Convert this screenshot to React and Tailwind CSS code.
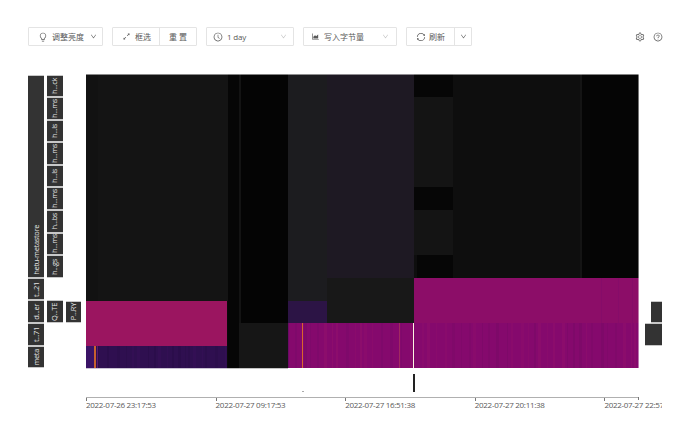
import React from "react";
import { AiOutlineBulb, AiOutlineDown, AiOutlineClockCircle, AiOutlineAreaChart, AiOutlineSync, AiOutlineSetting, AiOutlineQuestionCircle, AiOutlineArrowsAlt } from "react-icons/ai";

const F = { fontFamily: '"Open Sans","Noto Sans CJK SC",sans-serif' };

function Btn({ className = "", children }) {
  return <div className={"h-[19px] border border-[#e4e4e4] rounded-[1px] flex items-center text-[8px] text-[#595959] bg-white " + className}>{children}</div>;
}

function Label({ t, h, className = "items-center" }) {
  return (
    <div className={"flex justify-center bg-[#333333] border-y border-[#c8c8c8] w-full text-[7.5px] tracking-[-0.35px] leading-none text-[#e4e4e4] overflow-hidden " + className} style={{ height: h }}>
      <span className="[writing-mode:vertical-rl] rotate-180 whitespace-nowrap ml-[1px]">{t}</span>
    </div>
  );
}

const R = 22.6;

function stripes(x0, x1, y, h, colors, seed) {
  const out = [];
  let s = seed;
  let x = x0;
  while (x < x1) {
    s = (s * 9301 + 49297) % 233280;
    const w = 1 + (s % 3);
    const c = colors[(s >> 3) % colors.length];
    out.push(<rect key={seed + "-" + x} x={x} y={y} width={Math.min(w, x1 - x)} height={h} fill={c} />);
    x += w + 2 + ((s >> 5) % 7);
  }
  return out;
}

function Heatmap() {
  const X = 86;
  const Y = 74;
  const r = (x, y, w, h, fill, o) => <rect x={x - X} y={y - Y} width={w} height={h} fill={fill} opacity={o} />;
  return (
    <svg width="553" height="295" viewBox="0 0 553 295" shapeRendering="crispEdges" className="block shrink-0">
      {r(86, 74, 142, 227, "#141414")}
      {r(86, 74, 12, 227, "#121212")}
      {r(228, 74, 11, 295, "#060606")}
      {r(227, 301, 1, 68, "#0a0a0a")}
      {r(239, 74, 2, 295, "#131313")}
      {r(241, 74, 47, 249, "#040404")}
      {r(239, 323, 49, 46, "#161616")}
      {r(288, 74, 39, 227, "#1c1c1f")}
      {r(327, 74, 87, 204, "#1e1923")}
      {r(327, 278, 87, 45, "#181818")}
      {r(288, 301, 39, 22, "#2c1445")}
      {r(414, 74, 39, 204, "#141414")}
      {r(414, 74, 39, 23, "#060606")}
      {r(414, 187, 39, 23, "#060606")}
      {r(414, 255, 3, 23, "#0e0e0e")}
      {r(417, 255, 36, 23, "#060606")}
      {r(453, 74, 127, 204, "#0e0e0e")}
      {r(580, 74, 2, 204, "#141414")}
      {r(582, 74, 57, 204, "#050505")}
      {r(86, 301, 141, 45, "#9b1560")}
      {r(86, 346, 141, 23, "#2f0f50")}
      {stripes(12, 141, 272, 22, ["#2b0d4b", "#330f54", "#2c0e4c"], 17)}
      {r(86, 346, 8, 22, "#3a1366")}
      {r(94, 346, 2, 22, "#c8602e")}
      {r(97, 346, 1, 22, "#5a1a70")}
      {r(288, 323, 126, 45, "#85096d")}
      {stripes(202, 328, 249, 45, ["#7d0969", "#8a0b6c", "#7f096b", "#8c0d6c"], 5)}
      {r(288, 323, 1, 45, "#6a0a66")}
      {r(302, 323, 1, 45, "#d9662c")}
      {r(399, 323, 1, 45, "#a02a60")}
      {r(413, 323, 1, 45, "#fff4e0")}
      {r(414, 278, 225, 45, "#8c0d68")}
      {r(601, 278, 1, 45, "#860c69")}
      {r(618, 278, 1, 45, "#860c69")}
      {r(632, 278, 1, 45, "#860c69")}
      {r(414, 323, 225, 45, "#85096d")}
      {stripes(328, 553, 249, 45, ["#7e0969", "#890b6c", "#80096a", "#8b0c6c"], 29)}
      {r(86, 74, 553, 1, "#ffffff", 0.5)}
      {r(638, 74, 1, 295, "#ffffff", 0.45)}
      {r(86, 368, 553, 1, "#ffffff", 0.75)}
    </svg>
  );
}

const ticks = ["2022-07-26 23:17:53", "2022-07-27 09:17:53", "2022-07-27 16:51:38", "2022-07-27 20:11:38", "2022-07-27 22:57:53"];

export default function App() {
  return (
    <div className="w-[690px] h-[437px] bg-white overflow-hidden relative" style={F}>
      <div className="flex items-center pt-[27px] pl-[28px] h-[46px]">
        <Btn className="w-[75px] pl-[9px] gap-[4px]">
          <AiOutlineBulb size={10} /><span>调整亮度</span><AiOutlineDown size={7} className="ml-[2px]" />
        </Btn>
        <Btn className="ml-[9px] w-[85px]">
          <div className="w-[47px] h-full flex items-center pl-[9px] gap-[4px] border-r border-[#e4e4e4]"><AiOutlineArrowsAlt size={9} /><span>框选</span></div>
          <div className="flex-1 text-center">重 置</div>
        </Btn>
        <Btn className="ml-[9px] w-[88px] pl-[6px] gap-[4px]">
          <AiOutlineClockCircle size={10} /><span className="tracking-[-0.2px]">1 day</span><AiOutlineDown size={7} className="ml-auto mr-[6px] text-[#bfbfbf]" />
        </Btn>
        <Btn className="ml-[9px] w-[94px] pl-[7px] gap-[4px]">
          <AiOutlineAreaChart size={9} /><span>写入字节量</span><AiOutlineDown size={7} className="ml-auto mr-[7px] text-[#bfbfbf]" />
        </Btn>
        <Btn className="ml-[9px] w-[66px]">
          <div className="w-[48px] h-full flex items-center pl-[9px] gap-[3px] border-r border-[#e4e4e4]"><AiOutlineSync size={10} /><span>刷新</span></div>
          <div className="flex-1 flex justify-center"><AiOutlineDown size={7} /></div>
        </Btn>
        <div className="ml-auto mr-[27px] flex items-center gap-[8px] text-[#595959]">
          <AiOutlineSetting size={10} /><AiOutlineQuestionCircle size={10} />
        </div>
      </div>

      <div className="flex mt-[28px]">
        <div className="w-[16px] ml-[28px] pt-[0.5px] flex flex-col">
          <Label t="hetu-metastore" h={R * 9} className="items-end pb-[2px]" />
          <Label t="t...21" h={R} />
          <Label t="d...er" h={R} />
          <Label t="t...71" h={R} />
          <Label t="meta" h={R} />
        </div>
        <div className="w-[16px] ml-[2.5px] pt-[0.5px] flex flex-col">
          {["h...ck", "h...ms", "h...ls", "h...ms", "h...ls", "h...ms", "h...bs", "h...ms", "h...gs"].map((t, i) => <Label key={i} t={t} h={R} />)}
          <div style={{ height: R }} />
          <Label t="Q...TE" h={R} />
        </div>
        <div className="w-[15px] ml-[3px] pt-[0.5px] flex flex-col">
          <div style={{ height: R * 10 }} />
          <Label t="P...RY" h={R} />
        </div>
        <div className="ml-[5.5px]"><Heatmap /></div>
        <div className="w-[17px] ml-[6px] pt-[0.5px] flex flex-col items-end">
          <div style={{ height: R * 10 }} />
          <div className="w-[11px] bg-[#333333] border-y border-[#c8c8c8]" style={{ height: R }} />
          <div className="w-[17px] bg-[#333333] border-y border-[#c8c8c8]" style={{ height: R }} />
        </div>
      </div>

      <div className="relative ml-[86px] w-[553px] h-[18px] mt-[5px]">
        <div className="absolute left-[216px] top-[17px] w-[2px] h-[1px] bg-[#aaaaaa]" />
        <div className="absolute left-[327px] top-0 w-[2px] h-[18px] bg-[#222222]" />
      </div>

      <div className="ml-[86px] mt-[5px] w-[576px] overflow-hidden">
        <div className="flex w-[700px] border-t border-transparent">
          {ticks.map((t, i) => (
            <div key={i} className={"relative shrink-0 " + (i === 4 ? "w-[34px]" : "w-[129.6px]")}>
              <div className="absolute left-0 top-0 w-[1px] h-[3px] bg-[#777777]" />
              <div className="text-[8px] tracking-[-0.3px] leading-[10px] pt-[2px] text-[#595959] whitespace-nowrap">{t}</div>
            </div>
          ))}
        </div>
      </div>
      <div className="absolute left-[86px] top-[397px] w-[553px] h-[1px] bg-[#b0b0b0]" />
      <div className="absolute left-[638px] top-[397px] w-[1px] h-[3px] bg-[#777777]" />
    </div>
  );
}
